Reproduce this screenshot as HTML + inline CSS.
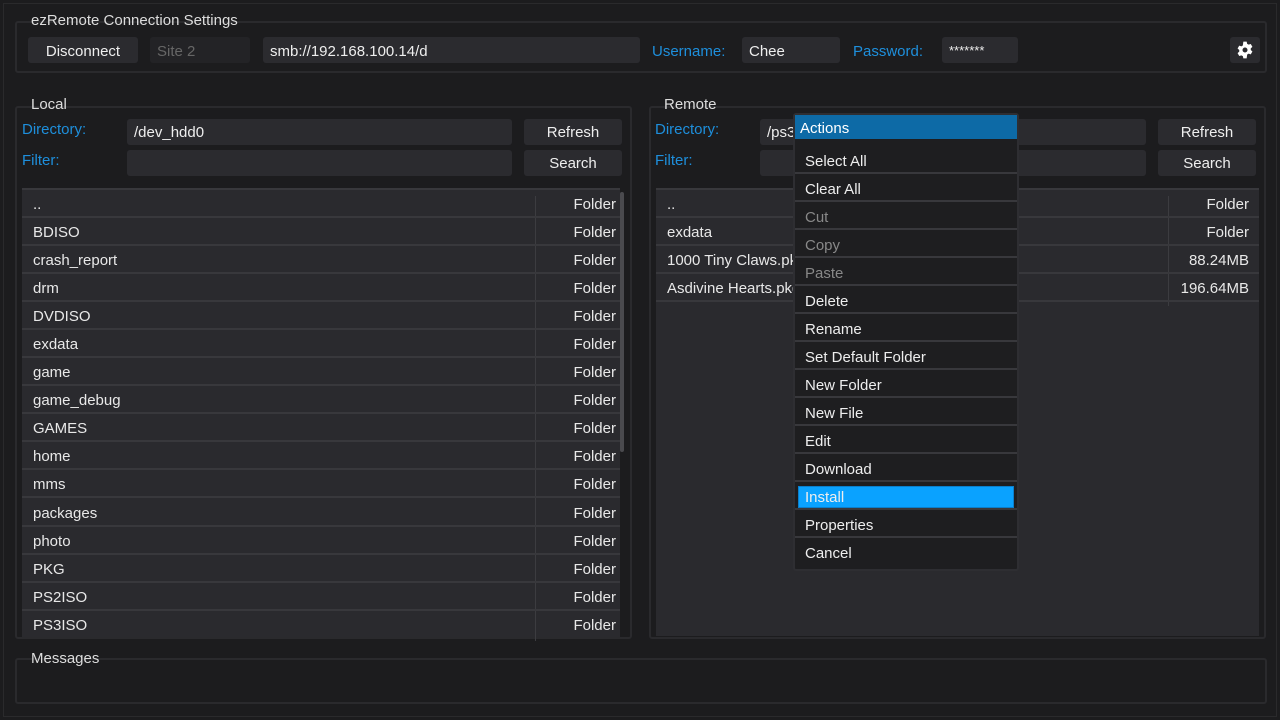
<!DOCTYPE html>
<html><head><style>
*{margin:0;padding:0;box-sizing:border-box}
body{width:1280px;height:720px;background:#1c1c1e;font-family:"Liberation Sans",sans-serif;font-size:15px;color:#e8e8e8;position:relative;overflow:hidden}
.a{position:absolute}
.frame{position:absolute;border:2px solid #2a2a2d;border-radius:3px}
.leg{position:absolute;color:#ddd;font-size:15px;background:transparent}
.btn{position:absolute;background:#2b2b2f;border-radius:3px;text-align:center;color:#eee}
.inp{position:absolute;background:#2b2b2f;border-radius:3px;color:#eee;padding-left:7px}
.lbl{position:absolute;color:#1e8fdc}
.tbl{position:absolute;background:#2a2a2e}
.row{position:absolute;left:0;height:28px;border-bottom:2px solid #38383c;width:100%}
.row span{position:absolute;top:6px}
.menu{position:absolute;left:793px;top:113px;width:226px;height:458px;background:#1e1e20;border:2px solid #2e2e32;border-radius:3px}
.mi{position:absolute;left:0;width:222px;height:28px;border-bottom:2px solid #38383c;padding-left:10px;padding-top:7px;color:#eee}
.dis{color:#888}
</style></head><body>
<div class="a" style="left:3px;top:3px;width:1274px;height:714px;border:1px solid #2a2a2c"></div>

<div class="frame" style="left:15px;top:21px;width:1252px;height:52px"></div>
<div class="leg" style="left:31px;top:12px">ezRemote Connection Settings</div>
<div class="btn" style="left:28px;top:37px;width:110px;height:26px;padding-top:6px">Disconnect</div>
<div class="inp" style="left:150px;top:37px;width:100px;height:26px;padding-top:6px;color:#666;background:#232326">Site 2</div>
<div class="inp" style="left:263px;top:37px;width:377px;height:26px;padding-top:6px">smb://192.168.100.14/d</div>
<div class="lbl" style="left:652px;top:43px">Username:</div>
<div class="inp" style="left:742px;top:37px;width:98px;height:26px;padding-top:6px">Chee</div>
<div class="lbl" style="left:853px;top:43px">Password:</div>
<div class="inp" style="left:942px;top:37px;width:76px;height:26px;padding-top:6px;font-size:13px">*******</div>
<div class="btn" style="left:1230px;top:37px;width:30px;height:26px">
<svg width="20" height="20" viewBox="0 0 24 24" style="margin-top:3px"><path fill="#fff" fill-rule="evenodd" d="M10 2h4l.6 2.6 1.8 1 2.5-.8 2 3.4-2 1.8v2l2 1.8-2 3.4-2.5-.8-1.8 1L14 22h-4l-.6-2.6-1.8-1-2.5.8-2-3.4 2-1.8v-2l-2-1.8 2-3.4 2.5.8 1.8-1zM12 9a3 3 0 1 0 0 6 3 3 0 0 0 0-6z"/></svg></div>

<!-- Local -->
<div class="frame" style="left:15px;top:106px;width:617px;height:533px"></div>
<div class="leg" style="left:31px;top:96px">Local</div>
<div class="lbl" style="left:22px;top:121px">Directory:</div>
<div class="inp" style="left:127px;top:119px;width:385px;height:26px;padding-top:5px">/dev_hdd0</div>
<div class="btn" style="left:524px;top:119px;width:98px;height:26px;padding-top:5px">Refresh</div>
<div class="lbl" style="left:22px;top:152px">Filter:</div>
<div class="inp" style="left:127px;top:150px;width:385px;height:26px"></div>
<div class="btn" style="left:524px;top:150px;width:98px;height:26px;padding-top:5px">Search</div>
<div class="tbl" style="left:22px;top:188px;width:598px;height:449px;border-top:2px solid #38383c">
<div class="a" style="left:513px;top:6px;width:1px;height:445px;background:#3c3c40"></div>
<div class="row" style="top:0"><span style="left:11px">..</span><span style="right:4px">Folder</span></div>
<div class="row" style="top:28px"><span style="left:11px">BDISO</span><span style="right:4px">Folder</span></div>
<div class="row" style="top:56px"><span style="left:11px">crash_report</span><span style="right:4px">Folder</span></div>
<div class="row" style="top:84px"><span style="left:11px">drm</span><span style="right:4px">Folder</span></div>
<div class="row" style="top:112px"><span style="left:11px">DVDISO</span><span style="right:4px">Folder</span></div>
<div class="row" style="top:140px"><span style="left:11px">exdata</span><span style="right:4px">Folder</span></div>
<div class="row" style="top:168px"><span style="left:11px">game</span><span style="right:4px">Folder</span></div>
<div class="row" style="top:196px"><span style="left:11px">game_debug</span><span style="right:4px">Folder</span></div>
<div class="row" style="top:224px"><span style="left:11px">GAMES</span><span style="right:4px">Folder</span></div>
<div class="row" style="top:252px"><span style="left:11px">home</span><span style="right:4px">Folder</span></div>
<div class="row" style="top:280px"><span style="left:11px">mms</span><span style="right:4px">Folder</span></div>
<div class="row" style="top:309px"><span style="left:11px">packages</span><span style="right:4px">Folder</span></div>
<div class="row" style="top:337px"><span style="left:11px">photo</span><span style="right:4px">Folder</span></div>
<div class="row" style="top:365px"><span style="left:11px">PKG</span><span style="right:4px">Folder</span></div>
<div class="row" style="top:393px"><span style="left:11px">PS2ISO</span><span style="right:4px">Folder</span></div>
<div class="row" style="top:421px;border:none"><span style="left:11px">PS3ISO</span><span style="right:4px">Folder</span></div>
</div>
<div class="a" style="left:620px;top:192px;width:4px;height:260px;background:#4a4a4e;border-radius:2px"></div>

<!-- Remote -->
<div class="frame" style="left:649px;top:106px;width:617px;height:533px"></div>
<div class="leg" style="left:664px;top:96px">Remote</div>
<div class="lbl" style="left:655px;top:121px">Directory:</div>
<div class="inp" style="left:760px;top:119px;width:386px;height:26px;padding-top:5px">/ps3</div>
<div class="btn" style="left:1158px;top:119px;width:98px;height:26px;padding-top:5px">Refresh</div>
<div class="lbl" style="left:655px;top:152px">Filter:</div>
<div class="inp" style="left:760px;top:150px;width:386px;height:26px"></div>
<div class="btn" style="left:1158px;top:150px;width:98px;height:26px;padding-top:5px">Search</div>
<div class="tbl" style="left:656px;top:188px;width:603px;height:448px;border-top:2px solid #38383c">
<div class="a" style="left:512px;top:6px;width:1px;height:110px;background:#3c3c40"></div>
<div class="row" style="top:0"><span style="left:11px">..</span><span style="right:10px">Folder</span></div>
<div class="row" style="top:28px"><span style="left:11px">exdata</span><span style="right:10px">Folder</span></div>
<div class="row" style="top:56px"><span style="left:11px">1000 Tiny Claws.pkg</span><span style="right:10px">88.24MB</span></div>
<div class="row" style="top:84px"><span style="left:11px">Asdivine Hearts.pkg</span><span style="right:10px">196.64MB</span></div>
</div>

<!-- Menu -->
<div class="menu">
<div class="a" style="left:0;top:0;width:222px;height:24px;background:#0d6aa6;color:#fff;padding:5px 0 0 5px">Actions</div>
<div class="mi" style="top:31px">Select All</div>
<div class="mi" style="top:59px">Clear All</div>
<div class="mi dis" style="top:87px">Cut</div>
<div class="mi dis" style="top:115px">Copy</div>
<div class="mi dis" style="top:143px">Paste</div>
<div class="mi" style="top:171px">Delete</div>
<div class="mi" style="top:199px">Rename</div>
<div class="mi" style="top:227px">Set Default Folder</div>
<div class="mi" style="top:255px">New Folder</div>
<div class="mi" style="top:283px">New File</div>
<div class="mi" style="top:311px">Edit</div>
<div class="mi" style="top:339px">Download</div>
<div class="mi" style="top:367px"><div class="a" style="left:3px;top:4px;width:216px;height:22px;background:#0aa2ff;border:1px solid #0b7fcc"></div><span style="position:relative">Install</span></div>
<div class="mi" style="top:395px">Properties</div>
<div class="mi" style="top:423px;border:none">Cancel</div>
</div>

<!-- Messages -->
<div class="frame" style="left:15px;top:658px;width:1252px;height:46px"></div>
<div class="leg" style="left:31px;top:650px">Messages</div>
</body></html>
